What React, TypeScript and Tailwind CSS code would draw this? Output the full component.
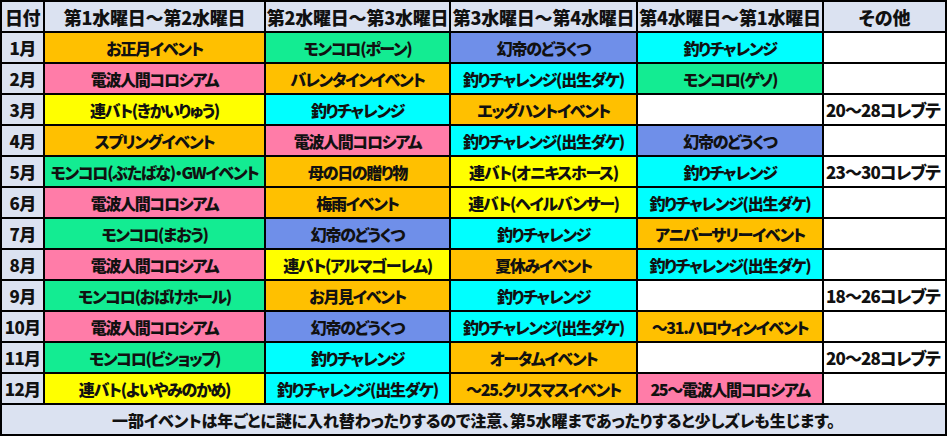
import React from "react";

type C = "o" | "p" | "g" | "c" | "b" | "y" | "w";

const bg: Record<C, string> = {
  o: "bg-[#ffc000]",
  p: "bg-[#ff7ca8]",
  g: "bg-[#13ec92]",
  c: "bg-[#00ffff]",
  b: "bg-[#6f8fe9]",
  y: "bg-[#ffff00]",
  w: "bg-white",
};

const rows: { m: string; cells: [string, C][]; other: string }[] = [
  { m: "1月", cells: [["お正月イベント", "o"], ["モンコロ(ポーン)", "g"], ["幻帝のどうくつ", "b"], ["釣りチャレンジ", "c"]], other: "" },
  { m: "2月", cells: [["電波人間コロシアム", "p"], ["バレンタインイベント", "o"], ["釣りチャレンジ(出生ダケ)", "c"], ["モンコロ(ゲソ)", "g"]], other: "" },
  { m: "3月", cells: [["連バト(きかいりゅう)", "y"], ["釣りチャレンジ", "c"], ["エッグハントイベント", "o"], ["", "w"]], other: "20～28コレブテ" },
  { m: "4月", cells: [["スプリングイベント", "o"], ["電波人間コロシアム", "p"], ["釣りチャレンジ(出生ダケ)", "c"], ["幻帝のどうくつ", "b"]], other: "" },
  { m: "5月", cells: [["モンコロ(ぶたばな)・GWイベント", "g"], ["母の日の贈り物", "o"], ["連バト(オニキスホース)", "y"], ["釣りチャレンジ", "c"]], other: "23～30コレブテ" },
  { m: "6月", cells: [["電波人間コロシアム", "p"], ["梅雨イベント", "o"], ["連バト(ヘイルバンサー)", "y"], ["釣りチャレンジ(出生ダケ)", "c"]], other: "" },
  { m: "7月", cells: [["モンコロ(まおう)", "g"], ["幻帝のどうくつ", "b"], ["釣りチャレンジ", "c"], ["アニバーサリーイベント", "o"]], other: "" },
  { m: "8月", cells: [["電波人間コロシアム", "p"], ["連バト(アルマゴーレム)", "y"], ["夏休みイベント", "o"], ["釣りチャレンジ(出生ダケ)", "c"]], other: "" },
  { m: "9月", cells: [["モンコロ(おばけホール)", "g"], ["お月見イベント", "o"], ["釣りチャレンジ", "c"], ["", "w"]], other: "18～26コレブテ" },
  { m: "10月", cells: [["電波人間コロシアム", "p"], ["幻帝のどうくつ", "b"], ["釣りチャレンジ(出生ダケ)", "c"], ["～31.ハロウィンイベント", "o"]], other: "" },
  { m: "11月", cells: [["モンコロ(ビショップ)", "g"], ["釣りチャレンジ", "c"], ["オータムイベント", "o"], ["", "w"]], other: "20～28コレブテ" },
  { m: "12月", cells: [["連バト(よいやみのかめ)", "y"], ["釣りチャレンジ(出生ダケ)", "c"], ["～25.クリスマスイベント", "o"], ["25～電波人間コロシアム", "p"]], other: "" },
];

const headers = ["日付", "第1水曜日～第2水曜日", "第2水曜日～第3水曜日", "第3水曜日～第4水曜日", "第4水曜日～第1水曜日", "その他"];

export default function App() {
  return (
    <div className="w-[948px] h-[438px] bg-white">
      <div className="grid w-[947px] grid-cols-[41px_219px_183px_185px_184px_121px] auto-rows-[29px] gap-[2px] bg-black p-[2px] font-black leading-none text-[#111] [font-family:'Noto_Sans_CJK_JP','Noto_Sans',sans-serif] [font-feature-settings:'palt']">
        {headers.map((h, i) => (
          <div
            key={h}
            className={`flex items-center justify-center overflow-hidden whitespace-nowrap bg-[#dbe2f1] text-[18px] ${
              i === 0 ? "tracking-[-0.5px]" : i === 5 ? "tracking-[0px]" : "tracking-[-0.2px]"
            }`}
          >
            {h}
          </div>
        ))}
        {rows.map((r) => (
          <React.Fragment key={r.m}>
            <div className="flex items-center justify-center overflow-hidden whitespace-nowrap bg-[#dbe2f1] text-[17px] tracking-[-0.8px]">
              {r.m}
            </div>
            {r.cells.map(([t, c], i) => (
              <div key={i} className={`flex items-center justify-center overflow-hidden whitespace-nowrap text-[16px] tracking-[-1.3px] ${bg[c]}`}>
                {t}
              </div>
            ))}
            <div className="flex items-center justify-start overflow-hidden whitespace-nowrap bg-white pl-[2px] text-[17px] tracking-[-0.9px]">
              {r.other}
            </div>
          </React.Fragment>
        ))}
        <div className="col-span-6 flex items-center justify-center overflow-hidden whitespace-nowrap bg-[#dbe2f1] text-[16px] tracking-[-0.1px]">
          一部イベントは年ごとに謎に入れ替わったりするので注意、第5水曜まであったりすると少しズレも生じます。
        </div>
      </div>
    </div>
  );
}
